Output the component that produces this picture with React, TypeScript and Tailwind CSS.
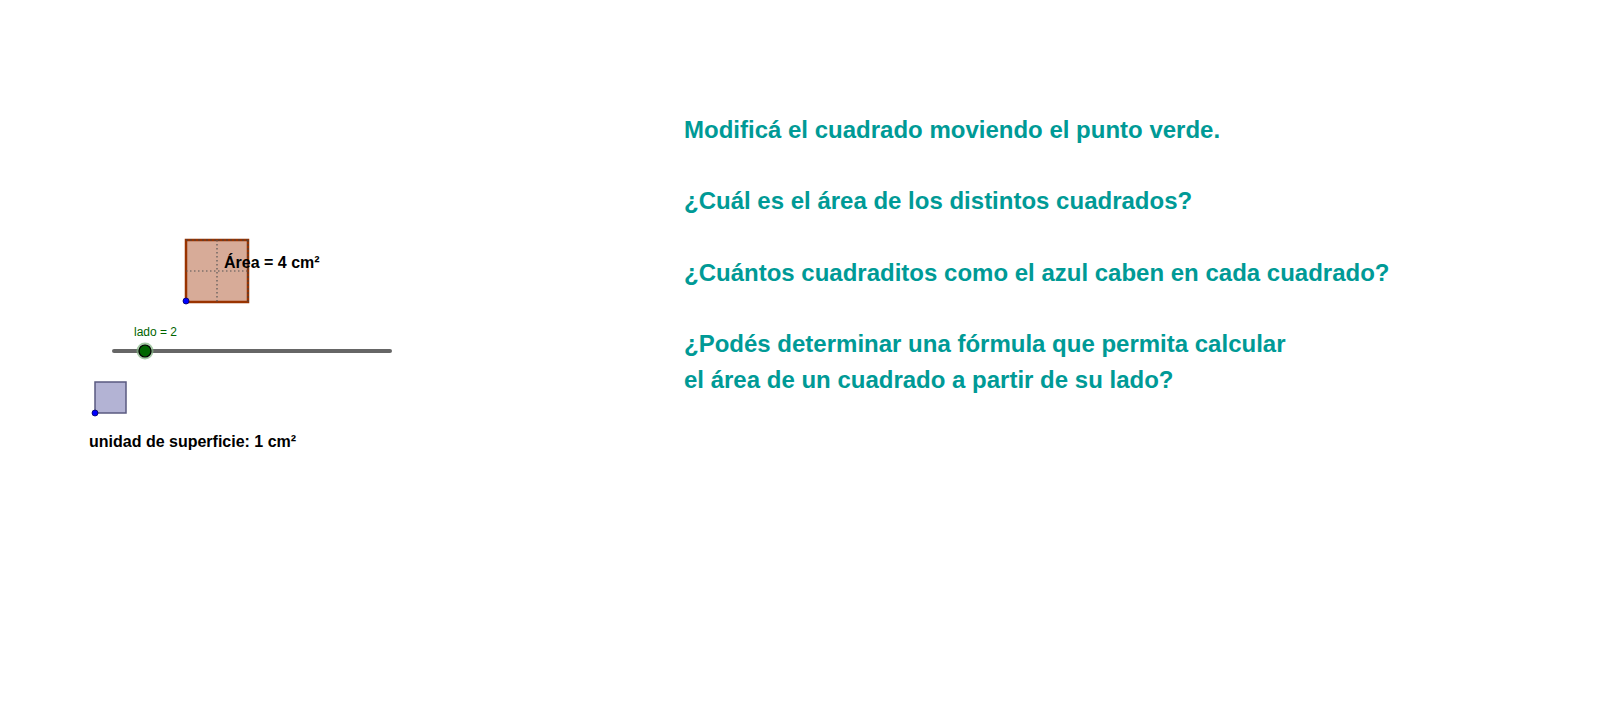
export default function App() {
  return (
    <div className="relative h-[704px] w-[1600px] overflow-hidden bg-white font-['Liberation_Sans',Arial,sans-serif]">
      {/* square with area */}
      <svg className="absolute left-[181px] top-[235px]" width="74" height="74" viewBox="0 0 74 74">
        <rect x="5" y="5" width="62" height="62" fill="#d7ab98" stroke="#993300" strokeWidth="2.5" />
        <line x1="5" y1="5" x2="67" y2="5" stroke="#444" strokeWidth="1" strokeDasharray="2 2" />
        <line x1="67" y1="5" x2="67" y2="67" stroke="#444" strokeWidth="1" strokeDasharray="2 2" />
        <line x1="36" y1="5" x2="36" y2="67" stroke="#555" strokeWidth="1.2" strokeDasharray="1.5 2.5" />
        <line x1="5" y1="36" x2="67" y2="36" stroke="#555" strokeWidth="1.2" strokeDasharray="1.5 2.5" />
        <circle cx="5" cy="66" r="3" fill="#0000ff" stroke="#000066" strokeWidth="0.8" />
      </svg>
      <div className="absolute left-[224px] top-[251px] text-[16px] font-bold leading-[24px] text-black">Área = 4 cm²</div>

      {/* slider */}
      <div className="absolute left-[134px] top-[323px] text-[12px] leading-[18px] text-[#006400]">lado = 2</div>
      <svg className="absolute left-[105px] top-[339px]" width="295" height="24" viewBox="0 0 295 24">
        <line x1="9" y1="12" x2="285" y2="12" stroke="#666666" strokeWidth="4" strokeLinecap="round" />
        <circle cx="40" cy="12" r="8.5" fill="#7fb27f" opacity="0.7" />
        <circle cx="40" cy="12" r="6" fill="#006600" stroke="#000" strokeWidth="1.2" />
      </svg>

      {/* unit square */}
      <svg className="absolute left-[90px] top-[378px]" width="42" height="42" viewBox="0 0 42 42">
        <rect x="5" y="4" width="31" height="31" fill="#b3b3d4" stroke="#5a5a80" strokeWidth="1.5" />
        <circle cx="5" cy="35" r="3" fill="#0000ff" stroke="#000066" strokeWidth="0.8" />
      </svg>
      <div className="absolute left-[89px] top-[430px] text-[16px] font-bold leading-[24px] text-black">unidad de superficie: 1 cm²</div>

      {/* instructions */}
      <div className="absolute left-[684px] top-[112px] flex flex-col text-[24px] font-bold leading-[35.7px] text-[#009a96]">
        <p>Modificá el cuadrado moviendo el punto verde.</p>
        <p className="mt-[35.7px]">¿Cuál es el área de los distintos cuadrados?</p>
        <p className="mt-[35.7px]">¿Cuántos cuadraditos como el azul caben en cada cuadrado?</p>
        <p className="mt-[35.7px]">¿Podés determinar una fórmula que permita calcular</p>
        <p>el área de un cuadrado a partir de su lado?</p>
      </div>
    </div>
  );
}
